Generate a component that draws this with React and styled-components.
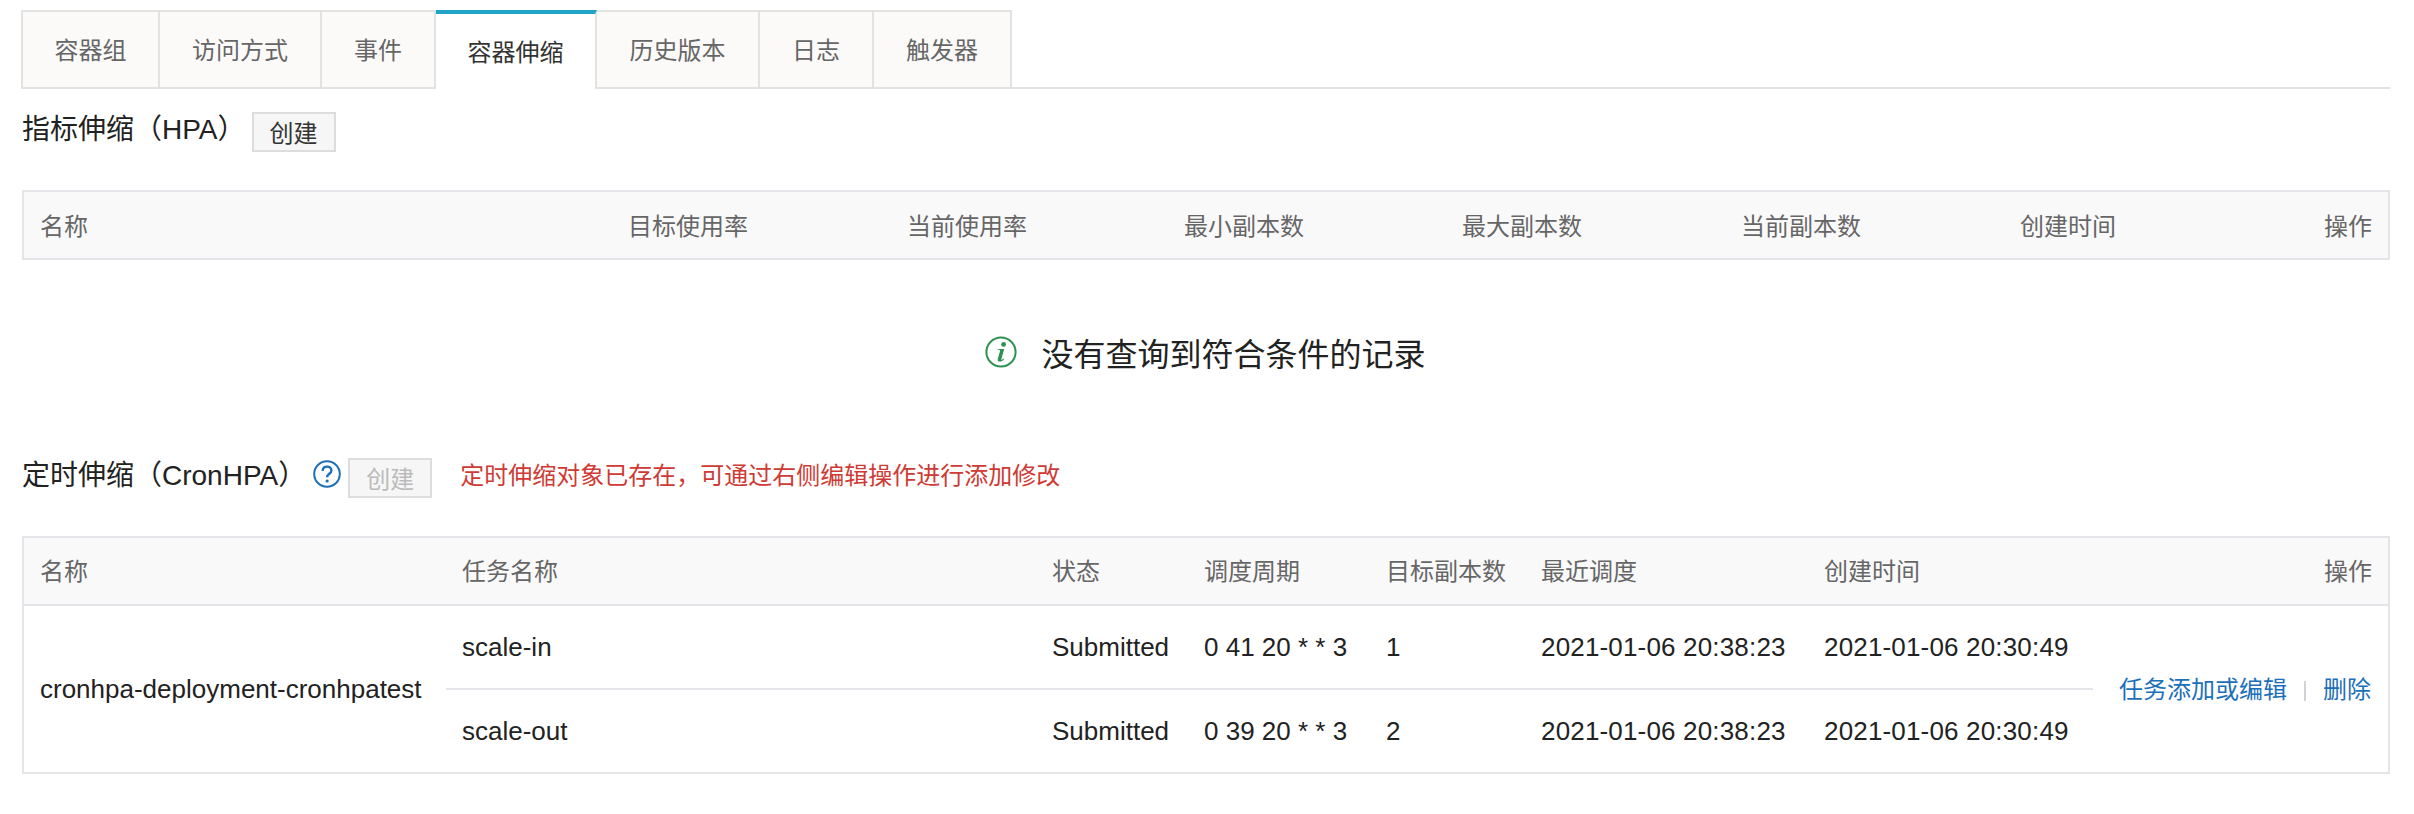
import styled, { createGlobalStyle } from 'styled-components';

const GlobalStyle = createGlobalStyle`
  html, body {
    margin: 0;
    background: #fff;
    font-family: "Liberation Sans", "Noto Sans CJK SC", sans-serif;
    font-size: 24px;
    color: #333;
  }
`;

const Page = styled.div`
  padding: 10px 24px 0 22px;
`;

const TabBar = styled.ul`
  display: flex;
  margin: 0 0 0 -1px;
  padding: 0;
  list-style: none;
  height: 79px;
  border-bottom: 2px solid #e2e2e2;
  box-sizing: border-box;
`;

const Tab = styled.li`
  box-sizing: border-box;
  height: 79px;
  width: ${({ $width }) => $width}px;
  display: flex;
  align-items: center;
  justify-content: center;
  padding-bottom: 2px;
  background: ${({ $active }) => ($active ? '#fff' : '#fbfaf9')};
  color: ${({ $active }) => ($active ? '#333' : '#666')};
  border-top: ${({ $active }) => ($active ? '4px solid #1fa3c8' : '2px solid #e2e2e2')};
  border-right: 2px solid #e2e2e2;
  border-left: ${({ $first }) => ($first ? '2px solid #e2e2e2' : 'none')};
  border-bottom: ${({ $active }) => ($active ? 'none' : '2px solid #e2e2e2')};
`;

const SectionHead = styled.div`
  display: flex;
  align-items: flex-start;
  height: ${({ $height }) => $height}px;
  margin-top: ${({ $top }) => $top}px;
`;

const Title = styled.h2`
  margin: 0;
  font-size: 28px;
  font-weight: 400;
  line-height: 36px;
  color: #222;
`;

const Button = styled.button`
  box-sizing: border-box;
  height: 40px;
  width: 84px;
  padding: 0 0 4px;
  margin-left: ${({ $gap }) => $gap}px;
  font: inherit;
  color: ${({ disabled }) => (disabled ? '#bbb' : '#333')};
  background: #f6f6f6;
  border: 2px solid #ddd;
`;

const Help = styled.svg`
  width: 28px;
  height: 28px;
  margin-left: 7px;
  margin-top: 2px;
  flex: none;
`;

const Warning = styled.span`
  margin-left: 28px;
  line-height: 36px;
  color: #cf3a34;
`;

const Table = styled.table`
  width: 100%;
  table-layout: fixed;
  border-collapse: separate;
  border-spacing: 0;
  border: 2px solid #e3e5e8;
  box-sizing: border-box;
`;

const Th = styled.th`
  box-sizing: border-box;
  height: ${({ $ruled }) => ($ruled ? '68px' : '66px')};
  padding: 0 16px ${({ $ruled }) => ($ruled ? '3px' : '2px')};
  font-weight: 400;
  text-align: ${({ $right }) => ($right ? 'right' : 'left')};
  color: #666;
  background: #f9f9fa;
  ${({ $ruled }) => $ruled && 'border-bottom: 2px solid #e3e5e8;'}
`;

const Td = styled.td`
  height: 82px;
  padding: 0 16px;
  font-size: 26px;
  white-space: nowrap;
  color: #222;
  ${({ $ruled }) => $ruled && 'border-bottom: 2px solid #e3e5e8;'}
`;

const ActionCell = styled(Td)`
  padding: 0 17px 4px 16px;
  text-align: right;
`;

const Time = styled.span`
  letter-spacing: 0.17px;
`;

const Empty = styled.div`
  display: flex;
  align-items: center;
  justify-content: center;
  gap: 24px;
  box-sizing: border-box;
  height: 186px;
  font-size: 32px;
  color: #222;
  padding: 0 1px 3px 0;
`;

const Link = styled.a`
  font-size: 24px;
  color: #1c6fb9;
  cursor: pointer;
`;

const Separator = styled.span`
  display: inline-block;
  width: 2px;
  height: 20px;
  margin: 0 17px;
  background: #cfd3d8;
  vertical-align: -3px;
`;

const TABS = [
  { label: '容器组', width: 139 },
  { label: '访问方式', width: 162 },
  { label: '事件', width: 114 },
  { label: '容器伸缩', width: 161, active: true },
  { label: '历史版本', width: 163 },
  { label: '日志', width: 114 },
  { label: '触发器', width: 138 },
];

const HPA_COLUMNS = [
  ['名称', 588],
  ['目标使用率', 279],
  ['当前使用率', 277],
  ['最小副本数', 278],
  ['最大副本数', 279],
  ['当前副本数', 279],
  ['创建时间', 279],
  ['操作', 105],
];

const CRON_COLUMNS = [
  ['名称', 422],
  ['任务名称', 590],
  ['状态', 152],
  ['调度周期', 182],
  ['目标副本数', 155],
  ['最近调度', 283],
  ['创建时间', 285],
  ['操作', 295],
];

const JOBS = [
  { name: 'scale-in', schedule: '0 41 20 * * 3', replicas: 1 },
  { name: 'scale-out', schedule: '0 39 20 * * 3', replicas: 2 },
];

function Head({ columns }) {
  return (
    <>
      <colgroup>
        {columns.map(([label, width]) => (
          <col key={label} style={{ width }} />
        ))}
      </colgroup>
      <thead>
        <tr>
          {columns.map(([label], index) => (
            <Th key={label} $right={index === columns.length - 1} $ruled={columns === CRON_COLUMNS}>
              {label}
            </Th>
          ))}
        </tr>
      </thead>
    </>
  );
}

export default function App() {
  return (
    <Page>
      <GlobalStyle />
      <TabBar>
        {TABS.map((tab, index) => (
          <Tab key={tab.label} $width={tab.width} $active={tab.active} $first={index === 0}>
            {tab.label}
          </Tab>
        ))}
      </TabBar>

      <SectionHead $top={23} $height={78}>
        <Title>指标伸缩（HPA）</Title>
        <Button $gap={6}>创建</Button>
      </SectionHead>
      <Table>
        <Head columns={HPA_COLUMNS} />
      </Table>
      <Empty>
        <svg width="32" height="32" viewBox="0 0 32 32" fill="none">
          <circle cx="16" cy="16" r="14.6" stroke="#2e9150" strokeWidth="2" />
          <circle cx="18.6" cy="8.4" r="2.4" fill="#2e9150" />
          <path d="M12.6 13h6.6l-2.9 10.2c-.2.7.5.8 1 .4l1.3-1.2.6.6c-1.3 1.8-2.9 2.6-4.4 2.6-1.7 0-2.5-1-2-2.6l2.3-8.2c.2-.7-.4-.9-2.7-1z" fill="#2e9150" />
        </svg>
        <span>没有查询到符合条件的记录</span>
      </Empty>

      <SectionHead $top={12} $height={78}>
        <Title>定时伸缩（CronHPA）</Title>
        <Help viewBox="0 0 28 28" fill="none">
          <circle cx="14" cy="14" r="12.8" stroke="#1c6fb9" strokeWidth="2" />
          <path d="M9.6 10.8c.2-2.7 2-4.2 4.5-4.2s4.3 1.6 4.3 3.8c0 3.3-4.3 3.5-4.3 6.9" stroke="#1c6fb9" strokeWidth="2.4" />
          <circle cx="14.1" cy="21" r="1.6" fill="#1c6fb9" />
        </Help>
        <Button $gap={7} disabled>创建</Button>
        <Warning>定时伸缩对象已存在，可通过右侧编辑操作进行添加修改</Warning>
      </SectionHead>
      <Table>
        <Head columns={CRON_COLUMNS} />
        <tbody>
          {JOBS.map((job, index) => (
            <tr key={job.name}>
              {index === 0 && <Td rowSpan={2}>cronhpa-deployment-cronhpatest</Td>}
              <Td $ruled={index === 0}>{job.name}</Td>
              <Td $ruled={index === 0}>Submitted</Td>
              <Td $ruled={index === 0}>{job.schedule}</Td>
              <Td $ruled={index === 0}>{job.replicas}</Td>
              <Td $ruled={index === 0}><Time>2021-01-06 20:38:23</Time></Td>
              <Td $ruled={index === 0}><Time>2021-01-06 20:30:49</Time></Td>
              {index === 0 && (
                <ActionCell rowSpan={2}>
                  <Link>任务添加或编辑</Link>
                  <Separator />
                  <Link>删除</Link>
                </ActionCell>
              )}
            </tr>
          ))}
        </tbody>
      </Table>
    </Page>
  );
}
